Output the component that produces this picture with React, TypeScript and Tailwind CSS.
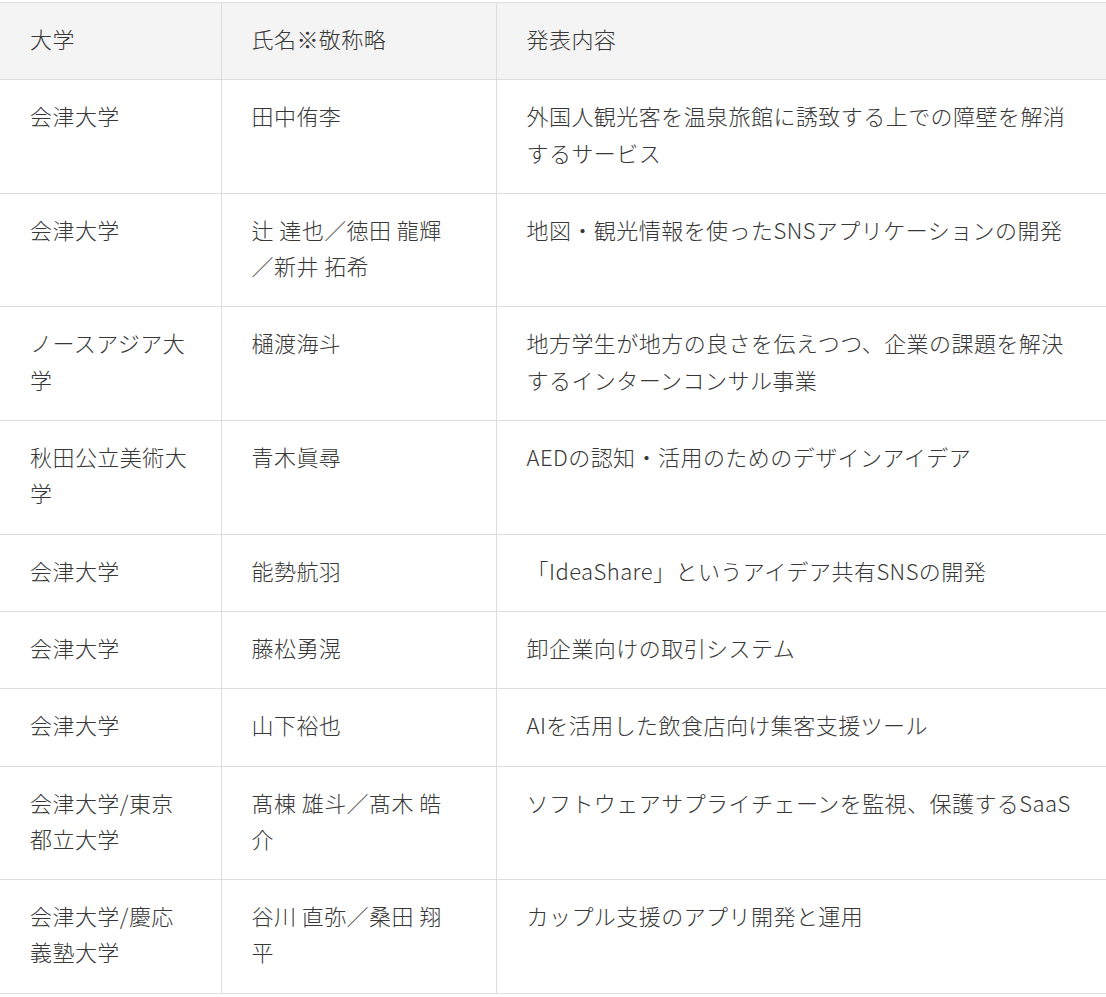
const rows: [string, string, string][] = [
    ["会津大学", "田中侑李", "外国人観光客を温泉旅館に誘致する上での障壁を解消するサービス"],
    ["会津大学", "辻 達也／徳田 龍輝／新井 拓希", "地図・観光情報を使ったSNSアプリケーションの開発"],
    ["ノースアジア大学", "樋渡海斗", "地方学生が地方の良さを伝えつつ、企業の課題を解決するインターンコンサル事業"],
    ["秋田公立美術大学", "青木眞尋", "AEDの認知・活用のためのデザインアイデア"],
    ["会津大学", "能勢航羽", "「IdeaShare」というアイデア共有SNSの開発"],
    ["会津大学", "藤松勇滉", "卸企業向けの取引システム"],
    ["会津大学", "山下裕也", "AIを活用した飲食店向け集客支援ツール"],
    ["会津大学/東京都立大学", "髙棟 雄斗／髙木 皓介", "ソフトウェアサプライチェーンを監視、保護するSaaS"],
    ["会津大学/慶応義塾大学", "谷川 直弥／桑田 翔平", "カップル支援のアプリ開発と運用"],
]

const cell = "border border-[#dddddd] pl-[30px] pt-[17px] pb-[23px] align-top text-left font-light"

export default function App() {
    return (
        <div className="w-[1106px] bg-white pt-[2px] text-[#383838] [font-family:'Noto_Sans_CJK_JP','Noto_Sans',sans-serif]">
            <table className="w-full table-fixed border-collapse text-[22px] leading-[36.3px] tracking-[0.45px]">
                <colgroup>
                    <col className="w-[221px]" />
                    <col className="w-[275px]" />
                    <col />
                </colgroup>
                <thead>
                    <tr className="bg-[#f4f4f4]">
                        <th className={cell + " border-l-0 pr-[30px]"}>大学</th>
                        <th className={cell + " pr-[42px]"}>氏名※敬称略</th>
                        <th className={cell + " border-r-0 pr-[20px]"}>発表内容</th>
                    </tr>
                </thead>
                <tbody>
                    {rows.map((r, i) => (
                        <tr key={i}>
                            <td className={cell + " border-l-0 pr-[30px]"}>{r[0]}</td>
                            <td className={cell + " pr-[42px]"}>{r[1]}</td>
                            <td className={cell + " border-r-0 pr-[20px]"}>{r[2]}</td>
                        </tr>
                    ))}
                </tbody>
            </table>
        </div>
    )
}
